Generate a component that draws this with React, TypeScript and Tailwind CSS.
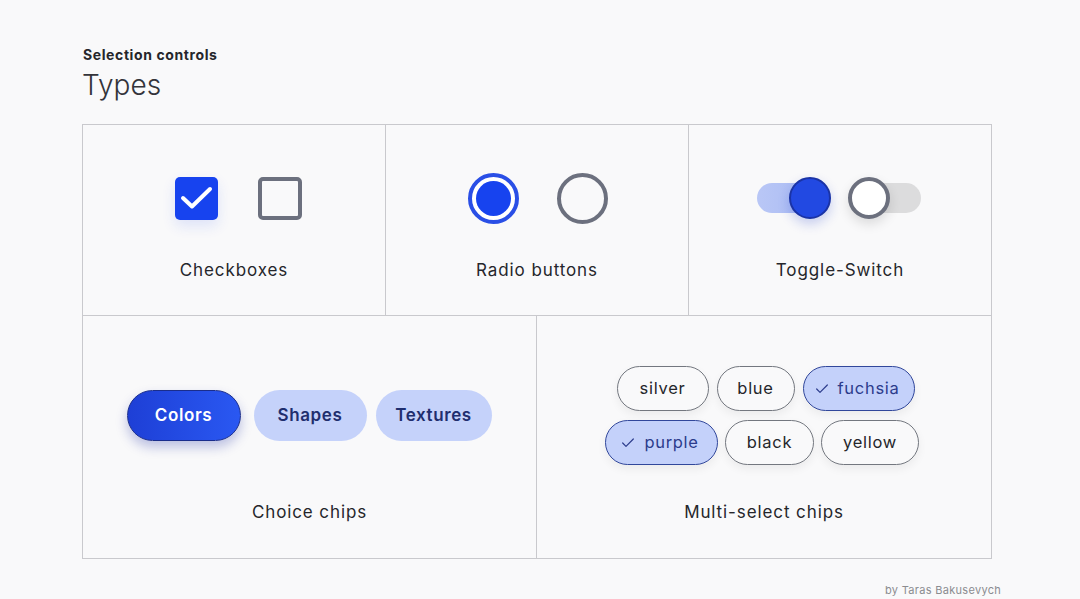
import { Check } from "lucide-react";

const font = { fontFamily: "Inter, 'Noto Sans', sans-serif" };

function Label({ children }: { children: string }) {
  return <div className="mt-[35px] text-[17px] leading-[24px] tracking-[0.9px] text-[#25262b]">{children}</div>;
}

function Chip({ label, selected, w }: { label: string; selected?: boolean; w: string }) {
  return (
    <div
      className={`${w} h-[45px] rounded-full flex items-center justify-center gap-2 text-[16.5px] tracking-[0.7px] shadow-[0_4px_10px_rgba(0,0,0,0.06)] ${
        selected
          ? "bg-[#c4d1fa] border-[1.5px] border-[#31479b] text-[#2c3c8c]"
          : "bg-[#f9f9fa] border-[1.5px] border-[#73777f] text-[#25262b]"
      }`}
    >
      {selected && <Check size={16} strokeWidth={1.8} className="-ml-1" />}
      <span>{label}</span>
    </div>
  );
}

export default function App() {
  return (
    <div className="w-[1080px] h-[599px] overflow-hidden bg-[#f9f9fa] px-[82px] pt-[46px] relative" style={font}>
      {/* Header */}
      <div className="text-[14px] leading-[18px] font-bold tracking-[0.6px] text-[#25262b] pl-[1px]">Selection controls</div>
      <div className="text-[28px] leading-[36px] font-light text-[#33343a] mt-[3px]">Types</div>

      {/* Grid */}
      <div className="mt-[21px] w-[910px] border border-[#c9c9cd]">
        <div className="flex h-[191px] border-b border-[#c9c9cd]">
          {/* Checkboxes */}
          <div className="w-[303px] border-r border-[#c9c9cd] flex flex-col items-center">
            <div className="mt-[48px] h-[50px] flex items-center gap-[40px] pl-[9px]">
              <div className="w-[43px] h-[43px] rounded-[5px] bg-[#1743ef] shadow-[0_6px_14px_rgba(23,67,239,0.12)] flex items-center justify-center">
                <svg width="43" height="43" viewBox="0 0 43 43">
                  <polyline points="8,21 17,29.5 35,12" fill="none" stroke="white" strokeWidth="4" strokeLinecap="round" strokeLinejoin="round" />
                </svg>
              </div>
              <div className="w-[44px] h-[43px] rounded-[5px] border-[4px] border-[#6c707e] bg-[#f9f9fa]" />
            </div>
            <Label>Checkboxes</Label>
          </div>

          {/* Radio buttons */}
          <div className="w-[303px] border-r border-[#c9c9cd] flex flex-col items-center">
            <div className="mt-[48px] h-[50px] flex items-center gap-[38px] pl-[2px]">
              <div className="w-[51px] h-[51px] rounded-full border-[4px] border-[#2a4fe6] bg-white flex items-center justify-center">
                <div className="w-[35px] h-[35px] rounded-full bg-[#1743ef]" />
              </div>
              <div className="w-[51px] h-[51px] rounded-full border-[4px] border-[#6c707e] bg-[#f9f9fa]" />
            </div>
            <Label>Radio buttons</Label>
          </div>

          {/* Toggle */}
          <div className="flex-1 flex flex-col items-center">
            <div className="mt-[48px] h-[50px] flex items-center gap-[17px] pr-[2px]">
              <div className="relative w-[74px] h-[42px]">
                <div className="absolute left-0 top-[6px] w-[60px] h-[30px] rounded-full bg-gradient-to-r from-[#b9c7f6] to-[#a9baf3]" />
                <div className="absolute right-0 top-0 w-[42px] h-[42px] rounded-full bg-[#2249e2] border-[2px] border-[#1a33a6] shadow-[0_5px_12px_rgba(20,50,200,0.22)]" />
              </div>
              <div className="relative w-[73px] h-[42px]">
                <div className="absolute right-0 top-[6px] w-[60px] h-[30px] rounded-full bg-[#dcdcdd]" />
                <div className="absolute left-0 top-0 w-[42px] h-[42px] rounded-full bg-white border-[4px] border-[#6c707e] shadow-[0_5px_12px_rgba(0,0,0,0.12)]" />
              </div>
            </div>
            <Label>Toggle-Switch</Label>
          </div>
        </div>

        <div className="flex h-[242px]">
          {/* Choice chips */}
          <div className="w-[454px] border-r border-[#c9c9cd] flex flex-col items-center">
            <div className="mt-[50px] h-[99px] flex items-center pr-[1px]">
              <div className="w-[114px] h-[51px] rounded-full bg-gradient-to-r from-[#1e3fd6] to-[#2a58f2] border border-[#1a2d8c] shadow-[0_6px_12px_rgba(20,40,160,0.28)] flex items-center justify-center text-white text-[17px] font-semibold tracking-[0.6px]">
                Colors
              </div>
              <div className="ml-[13px] w-[113px] h-[51px] rounded-full bg-[#c5d2fa] flex items-center justify-center text-[#1f2e6e] text-[17px] font-semibold tracking-[0.6px]">
                Shapes
              </div>
              <div className="ml-[9px] w-[116px] h-[51px] rounded-full bg-[#c5d2fa] flex items-center justify-center text-[#1f2e6e] text-[17px] font-semibold tracking-[0.6px]">
                Textures
              </div>
            </div>
            <Label>Choice chips</Label>
          </div>

          {/* Multi-select chips */}
          <div className="flex-1 flex flex-col items-center">
            <div className="mt-[50px] h-[99px] flex flex-col items-center gap-[9px]">
              <div className="flex gap-[8px] pl-[3px]">
                <Chip label="silver" w="w-[92px]" />
                <Chip label="blue" w="w-[78px]" />
                <Chip label="fuchsia" w="w-[112px]" selected />
              </div>
              <div className="flex gap-[7px] pr-[4px]">
                <Chip label="purple" w="w-[113px]" selected />
                <Chip label="black" w="w-[89px]" />
                <Chip label="yellow" w="w-[98px]" />
              </div>
            </div>
            <Label>Multi-select chips</Label>
          </div>
        </div>
      </div>

      <div className="absolute left-[885px] top-[583px] text-[11px] leading-[14px] text-[#8b8c90] tracking-[0.3px]">
        by Taras Bakusevych
      </div>
    </div>
  );
}
